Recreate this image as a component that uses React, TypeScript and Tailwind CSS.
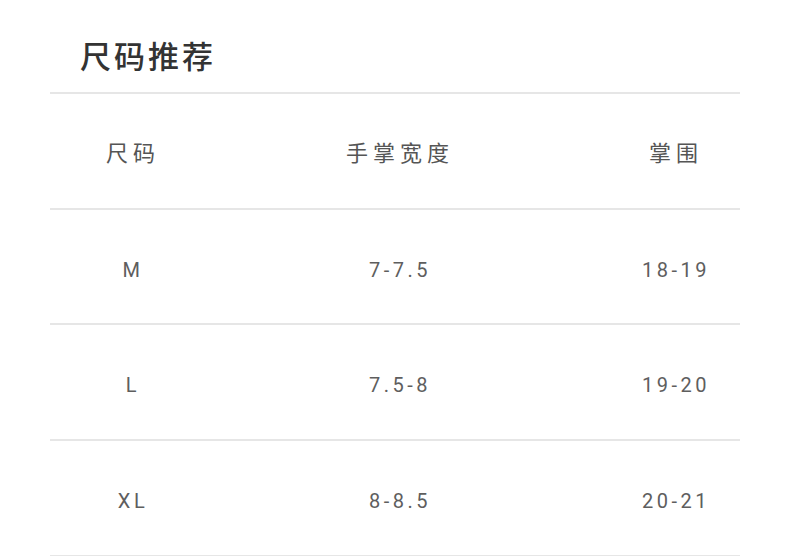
import React from 'react';

interface SizeRow {
    size: string;
    width: string;
    girth: string;
}

const rows: SizeRow[] = [
    { size: 'M', width: '7-7.5', girth: '18-19' },
    { size: 'L', width: '7.5-8', girth: '19-20' },
    { size: 'XL', width: '8-8.5', girth: '20-21' },
];

const font = { fontFamily: 'Roboto, "Noto Sans CJK SC", "Liberation Sans", sans-serif' };

const Row: React.FC<{ cells: string[]; header?: boolean }> = ({ cells, header }) => (
    <div className="grid grid-cols-[166px_368px_1fr] h-[115.7px] items-center pt-[6px] border-b-2 border-[#e6e6e6]">
        {cells.map((c, i) => (
            <div
                key={i}
                className={`text-center ${i === 2 ? 'pl-[28px]' : ''} ${
                    header ? 'text-[22px] tracking-[5px] text-[#555]' : 'text-[20px] tracking-[3.5px] text-[#5e5e5e]'
                }`}
            >
                {c}
            </div>
        ))}
    </div>
);

const App: React.FC = () => {
    return (
        <div className="w-[790px] h-[556px] bg-white overflow-hidden" style={font}>
            <div className="px-[50px]">
                <div className="h-[92px] flex items-center pl-[30px] pt-[24px]">
                    <h1 className="text-[31px] font-medium text-[#333] tracking-[3px]">尺码推荐</h1>
                </div>
                <div className="border-t-2 border-[#e6e6e6]">
                    <Row cells={['尺码', '手掌宽度', '掌围']} header />
                    {rows.map((r) => (
                        <Row key={r.size} cells={[r.size, r.width, r.girth]} />
                    ))}
                </div>
            </div>
        </div>
    );
};

export default App;
